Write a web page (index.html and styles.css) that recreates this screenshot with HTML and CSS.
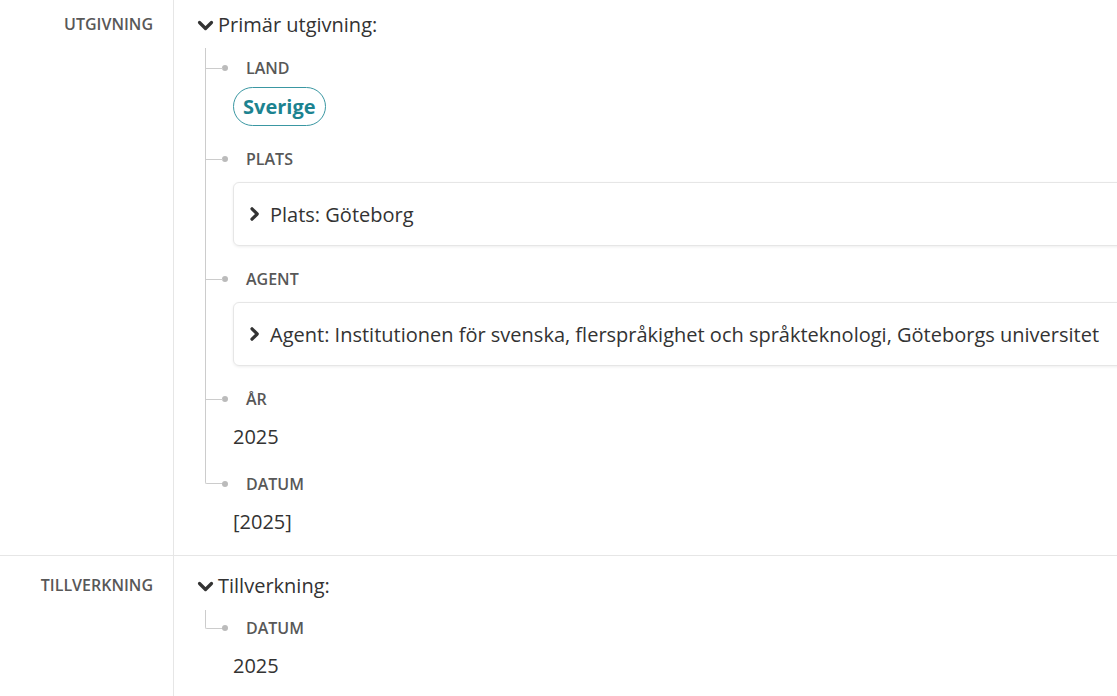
FILE: index.html
```html
<!DOCTYPE html>
<html lang="sv">
<head>
    <meta charset="UTF-8">
    <meta name="viewport" content="width=device-width, initial-scale=1.0">
    <title>Utgivning</title>
    <link rel="stylesheet" href="styles.css">
</head>
<body>
    <div class="record">
        <div class="row">
            <div class="row-label">UTGIVNING</div>
            <div class="row-value">
                <div class="heading">
                    <svg class="chev chev-down" viewBox="0 0 17 12"><path d="M2.5 2.5l6 6 6-6"/></svg>
                    <span>Primär utgivning:</span>
                </div>
                <ul class="tree">
                    <li>
                        <div class="label">LAND</div>
                        <span class="chip">Sverige</span>
                    </li>
                    <li>
                        <div class="label">PLATS</div>
                        <div class="card">
                            <svg class="chev chev-right" viewBox="0 0 12 14"><path d="M3 1.8l5.2 5.2-5.2 5.2"/></svg>
                            <span>Plats: Göteborg</span>
                        </div>
                    </li>
                    <li>
                        <div class="label">AGENT</div>
                        <div class="card">
                            <svg class="chev chev-right" viewBox="0 0 12 14"><path d="M3 1.8l5.2 5.2-5.2 5.2"/></svg>
                            <span>Agent: Institutionen för svenska, flerspråkighet och språkteknologi, Göteborgs universitet</span>
                        </div>
                    </li>
                    <li>
                        <div class="label">ÅR</div>
                        <div class="text">2025</div>
                    </li>
                    <li>
                        <div class="label">DATUM</div>
                        <div class="text">[2025]</div>
                    </li>
                </ul>
            </div>
        </div>

        <div class="row">
            <div class="row-label">TILLVERKNING</div>
            <div class="row-value">
                <div class="heading">
                    <svg class="chev chev-down" viewBox="0 0 17 12"><path d="M2.5 2.5l6 6 6-6"/></svg>
                    <span>Tillverkning:</span>
                </div>
                <ul class="tree">
                    <li>
                        <div class="label">DATUM</div>
                        <div class="text">2025</div>
                    </li>
                </ul>
            </div>
        </div>
    </div>
</body>
</html>
```

FILE: styles.css
```css
html, body {
    margin: 0;
    overflow: hidden;
}
body {
    font-family: "Open Sans", "Noto Sans", sans-serif;
    color: #333;
    background: #fff;
}
.record {
    margin-top: -5px;
}
.row {
    display: flex;
    border-bottom: 1px solid #e6e6e6;
}
.row-label {
    flex: 0 0 153px;
    padding: 18px 20px 0 0;
    border-right: 1px solid #e6e6e6;
    text-align: right;
    font-size: 16px;
    line-height: 22px;
    font-weight: 600;
    color: #585858;
}
.row-value {
    flex: 1;
    padding: 16px 0 19px 23px;
    white-space: nowrap;
}
.heading {
    display: flex;
    align-items: center;
    font-size: 20px;
    line-height: 28px;
}
.chev {
    fill: none;
    stroke: #333;
    stroke-width: 3.2;
    stroke-linecap: round;
    stroke-linejoin: round;
}
.chev-down {
    width: 17px;
    height: 12px;
    margin: 1px 4px 0 0;
}
.chev-right {
    width: 12px;
    height: 14px;
    margin-right: 9px;
}
.tree {
    list-style: none;
    margin: 9px 0 0 8px;
    padding: 0;
}
.tree li {
    position: relative;
    padding: 21px 0 0 28px;
}
.tree li:first-child {
    padding-top: 8px;
}
.tree li:first-child:last-child {
    padding-top: 7px;
}
.tree li::before {
    content: '';
    position: absolute;
    left: 0;
    top: 0;
    bottom: 0;
    border-left: 1px solid #ccc;
}
.tree li:last-child::before {
    bottom: auto;
    width: 18px;
    height: 32px;
    border-bottom: 1px solid #ccc;
    border-bottom-left-radius: 2px;
}
.tree li:first-child:last-child::before {
    height: 18px;
    top: 1px;
}
.tree li::after {
    content: '';
    position: absolute;
    left: 0;
    top: 33px;
    width: 18px;
    border-top: 1px solid #ccc;
}
.tree li:first-child::after {
    top: 20px;
}
.tree li:last-child::after {
    display: none;
}
.label {
    position: relative;
    padding-left: 13px;
    font-size: 16px;
    line-height: 24px;
    font-weight: 600;
    color: #585858;
}
.label::before {
    content: '';
    position: absolute;
    left: -11px;
    top: 9px;
    width: 6px;
    height: 6px;
    border-radius: 50%;
    background: #bbb;
}
.chip {
    display: inline-block;
    margin-top: 7px;
    padding: 0 9px;
    border: 1.5px solid #3a97a2;
    border-radius: 20px;
    font-size: 20px;
    line-height: 37px;
    font-weight: 700;
    color: #1c8390;
}
.card {
    display: flex;
    align-items: center;
    width: 900px;
    height: 62px;
    margin-top: 11px;
    padding: 0 15px;
    border: 1px solid #e6e6e6;
    border-radius: 6px;
    box-shadow: 0 1px 3px rgba(0, 0, 0, 0.07);
    font-size: 20px;
}
.text {
    margin-top: 12px;
    font-size: 20px;
    line-height: 28px;
}
```
